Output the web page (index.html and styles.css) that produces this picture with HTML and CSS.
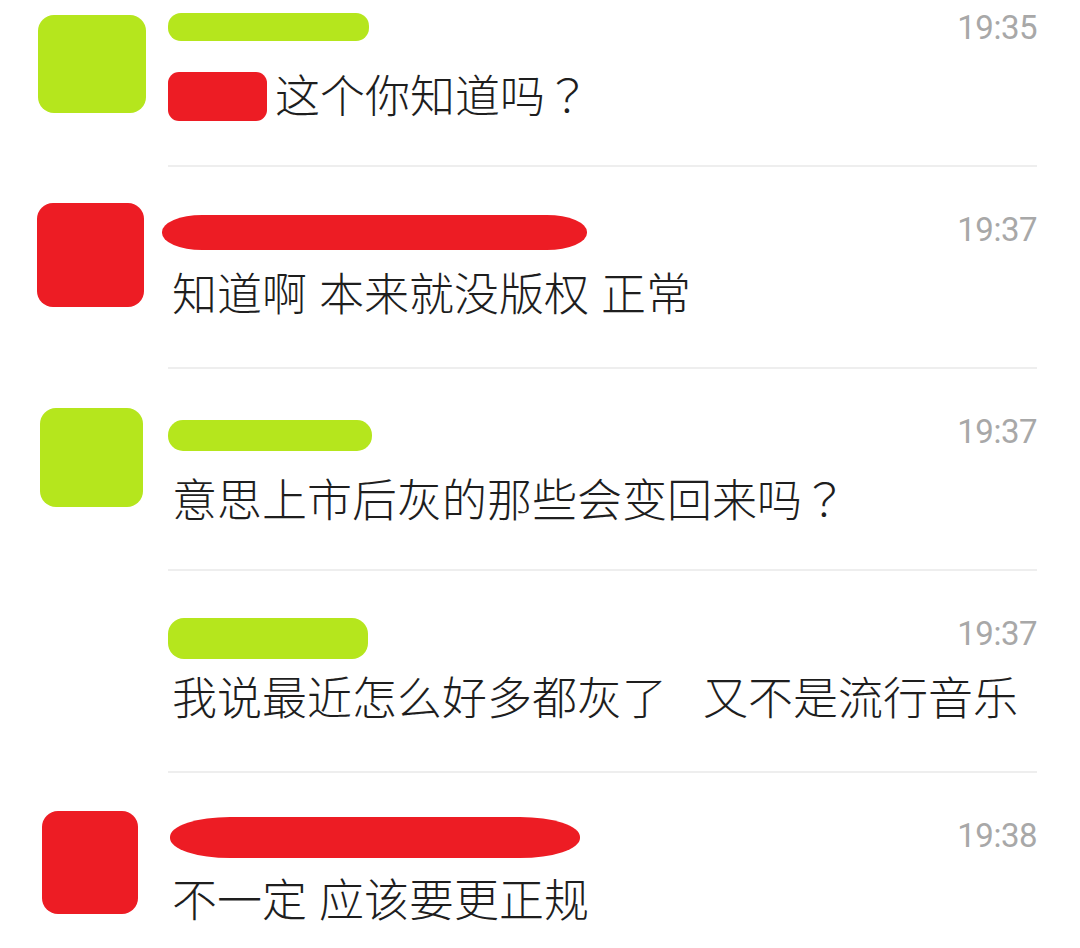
FILE: index.html
```html
<!DOCTYPE html>
<html lang="zh-CN">
<head>
<meta charset="utf-8">
<link rel="stylesheet" href="styles.css">
</head>
<body>
<div class="list">
  <div class="row r1">
    <div class="avatar-col"><div class="avatar green"></div></div>
    <div class="main">
      <div class="head"><span class="name green"></span><span class="time">19:35</span></div>
      <div class="msg"><span class="tag red"></span><span>这个你知道吗<span class="punct" lang="ja">？</span></span></div>
    </div>
  </div>
  <div class="row r2">
    <div class="avatar-col"><div class="avatar red"></div></div>
    <div class="main">
      <div class="head"><span class="name red"></span><span class="time">19:37</span></div>
      <div class="msg"><span class="text">知道啊 本来就没版权 正常</span></div>
    </div>
  </div>
  <div class="row r3">
    <div class="avatar-col"><div class="avatar green"></div></div>
    <div class="main">
      <div class="head"><span class="name green"></span><span class="time">19:37</span></div>
      <div class="msg"><span class="text">意思上市后灰的那些会变回来吗<span class="punct" lang="ja">？</span></span></div>
    </div>
  </div>
  <div class="row r4">
    <div class="avatar-col"></div>
    <div class="main">
      <div class="head"><span class="name green"></span><span class="time">19:37</span></div>
      <div class="msg"><span class="text">我说最近怎么好多都灰了   又不是流行音乐</span></div>
    </div>
  </div>
  <div class="row r5">
    <div class="avatar-col"><div class="avatar red"></div></div>
    <div class="main">
      <div class="head"><span class="name red"></span><span class="time">19:38</span></div>
      <div class="msg"><span class="text">不一定 应该要更正规</span></div>
    </div>
  </div>
</div>
</body>
</html>
```
FILE: styles.css
```css
html, body {
  margin: 0;
  padding: 0;
  background: #ffffff;
  overflow: hidden;
}

body {
  font-family: Roboto, "Noto Sans CJK SC", sans-serif;
  color: #1e1e1e;
}

.list {
  margin-top: -35px;
}

.row {
  display: flex;
  height: 202px;
}

.avatar-col {
  width: 168px;
  flex: none;
  box-sizing: border-box;
  padding-left: 38px;
  padding-top: 38px;
}

.avatar {
  width: 104px;
  height: 100px;
  border-radius: 16px;
}

.green { background: #b5e61d; }
.red { background: #ed1c24; }

.main {
  flex: 1;
  margin-right: 43px;
  box-sizing: border-box;
  height: 202px;
  padding-top: 43px;
  border-bottom: 2px solid #eeeeee;
}

.head {
  display: flex;
  justify-content: space-between;
  align-items: flex-start;
  height: 40px;
}

.name {
  display: block;
  margin-top: 5px;
  border-radius: 16px;
}

.time {
  font-family: Roboto, sans-serif;
  font-size: 33px;
  line-height: 40px;
  letter-spacing: -0.5px;
  color: #a8a8a8;
}

.msg {
  display: flex;
  align-items: flex-start;
  margin-top: 23px;
  padding-left: 4px;
  font-size: 45px;
  line-height: 45px;
  font-weight: 300;
  white-space: pre;
  word-spacing: 1px;
}

.punct {
  display: inline-block;
  width: 45px;
  font-family: "Noto Sans CJK JP", sans-serif;
  font-weight: 300;
}

.tag {
  display: block;
  width: 99px;
  height: 49px;
  margin-top: 1px;
  margin-left: -4px;
  margin-right: 8px;
  border-radius: 11px;
}

/* redaction shapes per row */
.r1 .avatar { width: 108px; height: 98px; margin-top: 12px; }
.r1 .name { width: 201px; height: 28px; margin-top: 5px; border-radius: 13px; }

.r2 .avatar { width: 107px; height: 104px; margin-top: -2px; margin-left: -1px; }
.r2 .name { width: 425px; height: 35px; margin-top: 5px; margin-left: -6px; border-radius: 40px / 17px; }

.r3 .avatar { width: 103px; height: 99px; margin-top: 1px; margin-left: 2px; }
.r3 .name { width: 204px; height: 31px; margin-top: 8px; border-radius: 15px; }

.r4 .name { width: 200px; height: 41px; margin-top: 4px; border-radius: 16px; }

.r5 .avatar { width: 96px; height: 103px; margin-left: 4px; }
.r5 .name { width: 410px; height: 41px; margin-top: 1px; margin-left: 2px; border-radius: 60px / 20px; }
```
